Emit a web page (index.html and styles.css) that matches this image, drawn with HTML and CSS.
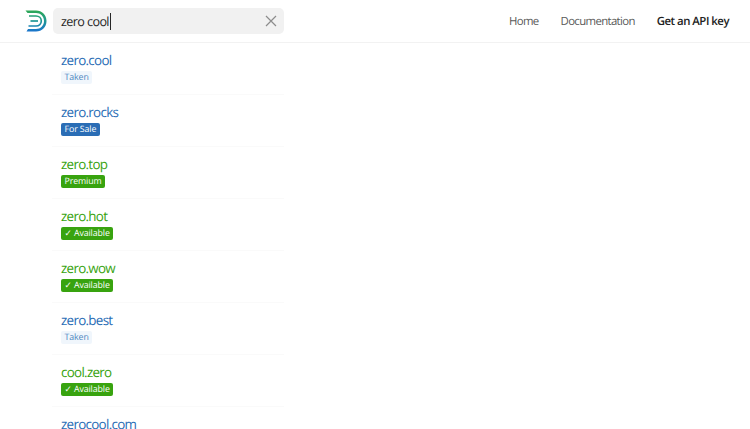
FILE: index.html
```html
<!DOCTYPE html>
<html lang="en">
<head>
<meta charset="utf-8">
<title>Domain search</title>
<link rel="stylesheet" href="styles.css">
</head>
<body>
<header class="header">
  <svg class="logo" width="22" height="22" viewBox="0 0 22 22" fill="none">
    <defs>
      <linearGradient id="g" gradientUnits="userSpaceOnUse" x1="0" y1="0" x2="0" y2="22">
        <stop offset="0" stop-color="#2fa84f"/>
        <stop offset="0.45" stop-color="#1f9a8f"/>
        <stop offset="1" stop-color="#1a73d0"/>
      </linearGradient>
    </defs>
    <path d="M0.5 0.5H11C17 0.5 21.5 5 21.5 11S17 21.5 11 21.5H1.5L3 19H11C15.5 19 19 15.5 19 11S15.5 3 11 3H2.5Z" fill="url(#g)"/>
    <path d="M4 6H11C14 6 16.3 8.2 16.3 11S14 16 11 16H3.5" stroke="url(#g)" stroke-width="1.7"/>
    <path d="M5.5 11H13" stroke="url(#g)" stroke-width="1.7"/>
  </svg>
  <div class="search">
    <span class="query">zero cool</span><span class="caret"></span>
    <svg class="clear" width="12" height="12" viewBox="0 0 12 12"><path d="M1 1L11 11M11 1L1 11" stroke="#8c8c8c" stroke-width="1.2" fill="none"/></svg>
  </div>
  <nav class="nav">
    <a class="nav-link">Home</a>
    <a class="nav-link">Documentation</a>
    <a class="nav-link nav-strong">Get an API key</a>
  </nav>
</header>
<ul class="results">
  <li class="row"><a class="name blue">zero.cool</a><span class="tag tag-taken">Taken</span></li>
  <li class="row"><a class="name blue">zero.rocks</a><span class="tag tag-sale">For Sale</span></li>
  <li class="row"><a class="name green">zero.top</a><span class="tag tag-green">Premium</span></li>
  <li class="row"><a class="name green">zero.hot</a><span class="tag tag-green">✓ Available</span></li>
  <li class="row"><a class="name green">zero.wow</a><span class="tag tag-green">✓ Available</span></li>
  <li class="row"><a class="name blue">zero.best</a><span class="tag tag-taken">Taken</span></li>
  <li class="row"><a class="name green">cool.zero</a><span class="tag tag-green">✓ Available</span></li>
  <li class="row"><a class="name blue">zerocool.com</a></li>
</ul>
</body>
</html>
```
FILE: styles.css
```css
* { box-sizing: border-box; }
html, body { margin: 0; height: 100%; overflow: hidden; background: #fff; }
body { font-family: "Open Sans", "Noto Sans", sans-serif; color: #262626; text-rendering: geometricPrecision; }
.header {
  height: 43px;
  display: flex;
  align-items: center;
  padding: 0 21px 0 25px;
  border-bottom: 1px solid #f2f2f2;
}
.logo { flex: none; }
.search {
  width: 231px;
  height: 26px;
  margin-left: 6px;
  padding: 0 7px 0 8px;
  display: flex;
  align-items: center;
  background: #f1f1f1;
  border-radius: 5px;
}
.query { font-size: 12.6px; letter-spacing: -0.6px; color: #262626; }
.caret { width: 1px; height: 17px; background: #262626; margin-left: 1px; }
.clear { margin-left: auto; }
.nav { margin-left: auto; display: flex; gap: 22px; }
.nav-link { font-size: 11.4px; letter-spacing: -0.65px; color: #5a5a5a; }
.nav-strong { color: #222; font-weight: 600; letter-spacing: -0.5px; }
.results { list-style: none; margin: 0; padding: 0 0 0 52px; width: 284px; height: 386px; overflow: hidden; }
.row {
  height: 52px;
  padding: 9px 0 0 9px;
  display: flex;
  flex-direction: column;
  align-items: flex-start;
  border-bottom: 1px solid #fafafa;
}
.name { font-size: 13.4px; font-weight: 500; line-height: 16px; letter-spacing: -0.7px; }
.blue { color: #2a6db5; }
.green { color: #38a30f; }
.tag {
  margin-top: 3px;
  height: 13px;
  padding: 0 3.5px;
  font-size: 8.8px;
  font-weight: 500;
  line-height: 13px;
  letter-spacing: -0.1px;
  border-radius: 2px;
  white-space: nowrap;
}
.tag-taken { background: #f0f6fc; color: #4f86c0; }
.tag-sale { background: #2a6db5; color: #fff; }
.tag-green { background: #38a30f; color: #fff; }
```
